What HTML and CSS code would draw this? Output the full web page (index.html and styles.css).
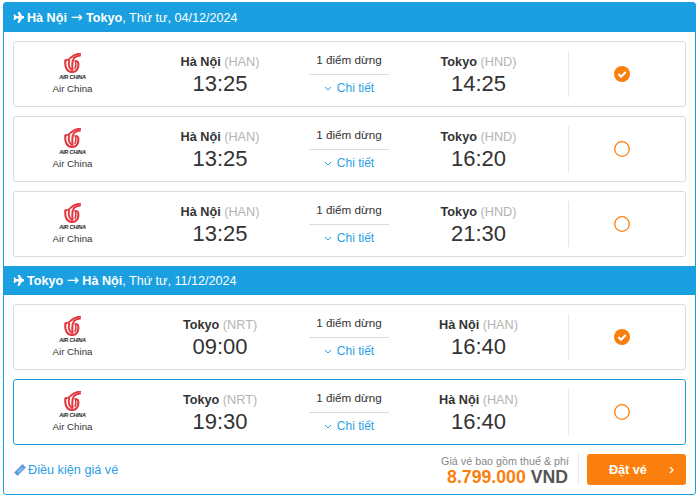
FILE: index.html
```html
<!DOCTYPE html>
<html lang="vi">
<head>
<meta charset="utf-8">
<title>Chọn chuyến bay</title>
<link rel="stylesheet" href="styles.css">
</head>
<body>
<svg class="defs" width="0" height="0" aria-hidden="true">
  <symbol id="plane" viewBox="0 0 1408 1408">
    <g transform="rotate(45 704 704) translate(0 -192)"><path d="M1376 160q44 52 12 148t-108 172l-161 161 160 696q5 19-12 33l-128 96q-7 6-19 6-4 0-7-1-15-3-21-16l-279-508-259 259 53 194q5 17-8 31l-96 96q-9 9-23 9h-2q-15-2-24-13l-189-252-252-189q-11-7-13-23-1-13 9-25l96-97q9-9 23-9 6 0 8 1l194 53 259-259-508-279q-14-8-17-24-2-16 9-27l128-128q14-13 30-8l665 159 160-160q76-76 172-108t148 12z"/></g>
  </symbol>
  <symbol id="logo" viewBox="0 0 17 20">
    <g fill="none" stroke="#e2383f" stroke-linecap="round">
      <path stroke-width="2.100" d="M1.500 7.500C.5 13 2.500 19 8 19c4.500 0 6.800-3.500 6.300-8.500-.2-1.500-1.300-2.500-3-2.500"/>
      <path stroke-width="2" d="M1.500 7.500C4 7 5.800 6 7 4.500 9.500 2 13 .9 16.500.5"/>
      <path stroke-width="1.900" d="M5.200 7.500C4.400 11 5 15 8 17"/>
      <path stroke-width="2" d="M8.600 16.500C8 12 7.800 8 10 5c1.500-1.600 3.500-2.300 6-2.500"/>
      <path stroke-width="1.500" d="M11 15.500c1-2 1.200-4 .6-6"/>
    </g>
  </symbol>
  <symbol id="ticket" viewBox="0 0 14 14">
    <path fill="#e9b6d2" d="M9.500.7 13.300 4.500 4.500 13.300.7 9.500z"/>
    <path d="M9.500 1.600 12.400 4.500 4.500 12.400 1.600 9.500z"/>
    <path fill="#a9d6f3" d="m9 4 .6.600-4.800 4.800-.6-.6zm1.100 1.100.4.400-4.800 4.800-.4-.4z"/>
  </symbol>
</svg>
<main class="booking">
  <h2 class="leg-title"><svg class="plane"><use href="#plane"/></svg><span><b>Hà Nội <span class="arrow">→</span> Tokyo</b>, Thứ tư, 04/12/2024</span></h2>
  <div class="flights">
    <article class="flight">
      <div class="airline"><svg class="logo"><use href="#logo"/></svg><i class="wordmark">AIR CHINA</i><span>Air China</span></div>
      <div class="point"><div class="city"><b>Hà Nội</b> <span>(HAN)</span></div><div class="time">13:25</div></div>
      <div class="stops"><div class="stop-count">1 điểm dừng</div><a class="detail"><svg class="chev" viewBox="0 0 8 5"><path d="M1 1l3 3 3-3"/></svg>Chi tiết</a></div>
      <div class="point"><div class="city"><b>Tokyo</b> <span>(HND)</span></div><div class="time">14:25</div></div>
      <div class="select"><svg class="radio" viewBox="0 0 16 16"><circle class="on" cx="8" cy="8" r="8"/><path class="tick" d="M4.300 8l2.700 2.700 4.700-4.800"/></svg></div>
    </article>
    <article class="flight">
      <div class="airline"><svg class="logo"><use href="#logo"/></svg><i class="wordmark">AIR CHINA</i><span>Air China</span></div>
      <div class="point"><div class="city"><b>Hà Nội</b> <span>(HAN)</span></div><div class="time">13:25</div></div>
      <div class="stops"><div class="stop-count">1 điểm dừng</div><a class="detail"><svg class="chev" viewBox="0 0 8 5"><path d="M1 1l3 3 3-3"/></svg>Chi tiết</a></div>
      <div class="point"><div class="city"><b>Tokyo</b> <span>(HND)</span></div><div class="time">16:20</div></div>
      <div class="select"><svg class="radio" viewBox="0 0 16 16"><circle class="off" cx="8" cy="8" r="7.300"/></svg></div>
    </article>
    <article class="flight">
      <div class="airline"><svg class="logo"><use href="#logo"/></svg><i class="wordmark">AIR CHINA</i><span>Air China</span></div>
      <div class="point"><div class="city"><b>Hà Nội</b> <span>(HAN)</span></div><div class="time">13:25</div></div>
      <div class="stops"><div class="stop-count">1 điểm dừng</div><a class="detail"><svg class="chev" viewBox="0 0 8 5"><path d="M1 1l3 3 3-3"/></svg>Chi tiết</a></div>
      <div class="point"><div class="city"><b>Tokyo</b> <span>(HND)</span></div><div class="time">21:30</div></div>
      <div class="select"><svg class="radio" viewBox="0 0 16 16"><circle class="off" cx="8" cy="8" r="7.300"/></svg></div>
    </article>
  </div>
  <h2 class="leg-title"><svg class="plane"><use href="#plane"/></svg><span><b>Tokyo <span class="arrow">→</span> Hà Nội</b>, Thứ tư, 11/12/2024</span></h2>
  <div class="flights">
    <article class="flight">
      <div class="airline"><svg class="logo"><use href="#logo"/></svg><i class="wordmark">AIR CHINA</i><span>Air China</span></div>
      <div class="point"><div class="city"><b>Tokyo</b> <span>(NRT)</span></div><div class="time">09:00</div></div>
      <div class="stops"><div class="stop-count">1 điểm dừng</div><a class="detail"><svg class="chev" viewBox="0 0 8 5"><path d="M1 1l3 3 3-3"/></svg>Chi tiết</a></div>
      <div class="point"><div class="city"><b>Hà Nội</b> <span>(HAN)</span></div><div class="time">16:40</div></div>
      <div class="select"><svg class="radio" viewBox="0 0 16 16"><circle class="on" cx="8" cy="8" r="8"/><path class="tick" d="M4.300 8l2.700 2.700 4.700-4.800"/></svg></div>
    </article>
    <article class="flight active">
      <div class="airline"><svg class="logo"><use href="#logo"/></svg><i class="wordmark">AIR CHINA</i><span>Air China</span></div>
      <div class="point"><div class="city"><b>Tokyo</b> <span>(NRT)</span></div><div class="time">19:30</div></div>
      <div class="stops"><div class="stop-count">1 điểm dừng</div><a class="detail"><svg class="chev" viewBox="0 0 8 5"><path d="M1 1l3 3 3-3"/></svg>Chi tiết</a></div>
      <div class="point"><div class="city"><b>Hà Nội</b> <span>(HAN)</span></div><div class="time">16:40</div></div>
      <div class="select"><svg class="radio" viewBox="0 0 16 16"><circle class="off" cx="8" cy="8" r="7.300"/></svg></div>
    </article>
  </div>
  <footer class="summary">
    <a class="terms"><svg class="ticket"><use href="#ticket"/></svg>Điều kiện giá vé</a>
    <div class="price">
      <div class="price-note">Giá vé bao gồm thuế &amp; phí</div>
      <div class="price-value"><strong>8.799.000</strong> VND</div>
    </div>
    <button class="book" type="button"><span>Đặt vé</span><svg class="book-arrow" viewBox="0 0 5 8"><path d="M1 1l3 3-3 3"/></svg></button>
  </footer>
</main>
</body>
</html>
```

FILE: styles.css
```css
* { box-sizing: border-box; }
html, body { margin: 0; padding: 0; }
body {
  width: 700px;
  height: 500px;
  overflow: hidden;
  background: #fff;
  font-family: "Liberation Sans", Arial, sans-serif;
  color: #333;
  padding: 2px 4px 0 3px;
}
.defs { position: absolute; }
.booking {
  height: 493px;
  border: 1px solid #1a9fe0;
  border-radius: 3px;
  display: flex;
  flex-direction: column;
}
.leg-title {
  margin: 0;
  height: 29px;
  background: #1a9fe0;
  color: #fff;
  font-size: 12.6px;
  font-weight: 400;
  display: flex;
  align-items: center;
  gap: 3px;
  padding-left: 9px;
  flex: none;
}
.leg-title b { font-weight: 700; }
.arrow { font-family: "DejaVu Sans", sans-serif; font-size: 14.5px; font-weight: 400; line-height: 1; }
.plane { width: 11px; height: 11px; fill: #fff; flex: none; }
.flights {
  display: flex;
  flex-direction: column;
  gap: 9px;
  padding: 9px 9px 9px;
}
.flight {
  height: 66px;
  border: 1px solid #dcdcdc;
  border-radius: 3px;
  background: #fff;
  display: grid;
  grid-template-columns: 117px 178px 80px 179px 1fr;
  align-items: center;
}
.flight.active { border-color: #1a9fe0; }
.airline {
  display: flex;
  flex-direction: column;
  align-items: center;
  font-size: 9.7px;
  line-height: 12px;
  color: #333;
}
.logo { width: 17px; height: 20px; }
.wordmark {
  font-size: 5.5px;
  font-weight: 700;
  line-height: 7px;
  color: #222;
  margin: 1px 0 2px;
  letter-spacing: -.2px;
}
.point { text-align: center; padding-top: 3px; }
.city { font-size: 12.7px; line-height: 15px; }
.city b { color: #333; }
.city span { color: #b4b4b4; }
.time { font-size: 22px; line-height: 26px; color: #333; margin-top: 1px; }
.stops { text-align: center; font-size: 11.7px; color: #333; padding-bottom: 3px; }
.stop-count {
  line-height: 14px;
  padding: 3px 0 7px;
  border-bottom: 1px solid #dcdcdc;
}
.detail {
  display: flex;
  justify-content: center;
  align-items: center;
  gap: 5px;
  padding-top: 6px;
  line-height: 14px;
  font-size: 12px;
  color: #2a9fe4;
}
.chev { width: 8px; height: 5px; fill: none; stroke: #2a9fe4; stroke-width: 1; }
.select {
  height: 46px;
  border-left: 1px solid #e8e8e8;
  display: flex;
  align-items: center;
  padding-left: 45px;
}
.radio { width: 16px; height: 16px; display: block; }
.radio .on { fill: #fb7f0d; }
.radio .off { fill: #fff; stroke: #fb7f0d; stroke-width: 1.300; }
.radio .tick { fill: none; stroke: #fff; stroke-width: 2.200; }
.summary {
  display: flex;
  align-items: center;
  padding: 0 9px;
}
.terms {
  display: flex;
  align-items: center;
  gap: 1px;
  font-size: 12.7px;
  color: #2a9fe4;
  flex: 1;
}
.ticket { width: 14px; height: 14px; fill: #3b9fe0; flex: none; }
.price {
  text-align: right;
  border-right: 1px solid #e8e8e8;
  padding-right: 9px;
  height: 31px;
}
.price-note { font-size: 10.75px; line-height: 13px; color: #888; padding-top: 1px; }
.price-value { font-size: 17.7px; font-weight: 700; line-height: 18px; color: #555; padding-right: 1px; }
.price-value strong { color: #fb7f0d; }
.book {
  width: 99px;
  height: 31px;
  margin-left: 8px;
  border: 0;
  border-radius: 3px;
  background: #fb7f0d;
  color: #fff;
  font: 700 12.6px "Liberation Sans", Arial, sans-serif;
  display: flex;
  align-items: center;
  padding: 0 12px 0 22px;
  justify-content: space-between;
}
.book-arrow { width: 5px; height: 8px; fill: none; stroke: #fff; stroke-width: 1.200; }
```
